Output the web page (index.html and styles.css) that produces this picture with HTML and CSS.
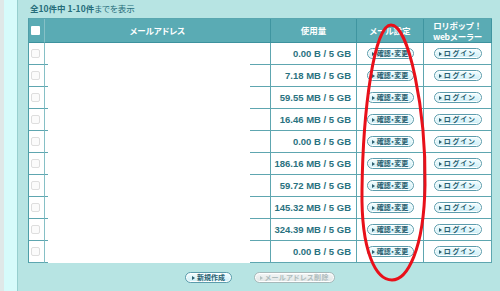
FILE: index.html
```html
<!DOCTYPE html>
<html lang="ja">
<head>
<meta charset="utf-8">
<title>メールアドレス一覧</title>
<link rel="stylesheet" href="styles.css">
</head>
<body>
<div class="page">
  <aside class="side"></aside>
  <main class="main">
    <p class="count"><b>全10件中 1-10件</b>までを表示</p>
    <div class="grid">
      <div class="hd ck"><span class="box head-box"></span></div>
      <div class="hd">メールアドレス</div>
      <div class="hd">使用量</div>
      <div class="hd">メール設定</div>
      <div class="hd two"><span class="ln">ロリポップ！</span><span class="ln">webメーラー</span></div>

      <div class="cell ck"><span class="box"></span></div><div class="cell mail"></div><div class="cell use">0.00 B / 5 GB</div><div class="cell btnc"><span class="btn">確認・変更</span></div><div class="cell btnc"><span class="btn login">ログイン</span></div>
      <div class="cell ck"><span class="box"></span></div><div class="cell mail"></div><div class="cell use">7.18 MB / 5 GB</div><div class="cell btnc"><span class="btn">確認・変更</span></div><div class="cell btnc"><span class="btn login">ログイン</span></div>
      <div class="cell ck"><span class="box"></span></div><div class="cell mail"></div><div class="cell use">59.55 MB / 5 GB</div><div class="cell btnc"><span class="btn">確認・変更</span></div><div class="cell btnc"><span class="btn login">ログイン</span></div>
      <div class="cell ck"><span class="box"></span></div><div class="cell mail"></div><div class="cell use">16.46 MB / 5 GB</div><div class="cell btnc"><span class="btn">確認・変更</span></div><div class="cell btnc"><span class="btn login">ログイン</span></div>
      <div class="cell ck"><span class="box"></span></div><div class="cell mail"></div><div class="cell use">0.00 B / 5 GB</div><div class="cell btnc"><span class="btn">確認・変更</span></div><div class="cell btnc"><span class="btn login">ログイン</span></div>
      <div class="cell ck"><span class="box"></span></div><div class="cell mail"></div><div class="cell use">186.16 MB / 5 GB</div><div class="cell btnc"><span class="btn">確認・変更</span></div><div class="cell btnc"><span class="btn login">ログイン</span></div>
      <div class="cell ck"><span class="box"></span></div><div class="cell mail"></div><div class="cell use">59.72 MB / 5 GB</div><div class="cell btnc"><span class="btn">確認・変更</span></div><div class="cell btnc"><span class="btn login">ログイン</span></div>
      <div class="cell ck"><span class="box"></span></div><div class="cell mail"></div><div class="cell use">145.32 MB / 5 GB</div><div class="cell btnc"><span class="btn">確認・変更</span></div><div class="cell btnc"><span class="btn login">ログイン</span></div>
      <div class="cell ck"><span class="box"></span></div><div class="cell mail"></div><div class="cell use">324.39 MB / 5 GB</div><div class="cell btnc"><span class="btn">確認・変更</span></div><div class="cell btnc"><span class="btn login">ログイン</span></div>
      <div class="cell ck"><span class="box"></span></div><div class="cell mail"></div><div class="cell use">0.00 B / 5 GB</div><div class="cell btnc"><span class="btn">確認・変更</span></div><div class="cell btnc"><span class="btn login">ログイン</span></div>

      <div class="mask"></div>
    </div>
    <div class="actions">
      <span class="btn new">新規作成</span>
      <span class="btn off">メールアドレス削除</span>
    </div>
  </main>
  <svg class="mark" width="500" height="291" viewBox="0 0 500 291" aria-hidden="true">
    <path d="M391,25 C409,25 426,110 425,185 C424,250 407,280 392,280 C376,280 361,252 362,190 C363,110 374,25 391,25 Z" fill="none" stroke="#e8101a" stroke-width="3"/>
  </svg>
</div>
</body>
</html>
```

FILE: styles.css
```css
* { box-sizing: border-box; }

html, body {
  margin: 0;
  padding: 0;
}

body {
  width: 500px;
  height: 291px;
  overflow: hidden;
  background: #b7e4e3;
  font-family: "Noto Sans CJK JP", "Liberation Sans", sans-serif;
  font-feature-settings: "palt";
  color: #226b78;
}

.page {
  position: relative;
  display: flex;
  width: 500px;
  height: 291px;
}

.side {
  flex: 0 0 18px;
  height: 100%;
  background: #d6fbfb;
  border-left: 4px solid #dfe8e8;
  border-right: 1px solid #96cfcf;
}

.main {
  flex: 1;
  padding-left: 10px;
}

.count {
  margin: 0;
  height: 18px;
  padding: 3px 0 0 2px;
  font-size: 8.5px;
  line-height: 11px;
  color: #266d7a;
  white-space: nowrap;
}

.count b { font-weight: 700; }

.grid {
  position: relative;
  display: grid;
  grid-template-columns: 16px 226px 86px 67px 68px;
  grid-template-rows: 24px repeat(10, 22px);
  width: 464px;
  border-left: 1px solid #4f9ea8;
  border-top: 1px solid #5aa7b0;
  background: #fff;
}

.hd, .cell {
  border-right: 1px solid #5ea6b0;
  border-bottom: 1px solid #5ea6b0;
  display: flex;
  align-items: center;
}

.hd {
  background: #5aabb4;
  border-right-color: #3f95a0;
  border-bottom-color: #3d929e;
  justify-content: center;
  color: #fff;
  font-weight: 700;
  font-size: 8.5px;
  line-height: 11px;
  text-align: center;
  white-space: nowrap;
}

.hd.two {
  flex-direction: column;
  justify-content: center;
  font-feature-settings: normal;
  letter-spacing: -0.4px;
}

.ln { display: block; height: 11px; }

.ck {
  justify-content: flex-end;
  padding-right: 4px;
  border-right-color: #86c0c6;
}

.box {
  display: block;
  width: 9px;
  height: 9px;
  border: 1px solid #dedede;
  border-radius: 2px;
  background: #fbfbfb;
}

.head-box {
  border: none;
  background: #fff;
  width: 9px;
  height: 9px;
  border-radius: 1px;
}

.cell { background: #fff; }

.use {
  justify-content: flex-end;
  padding-right: 5px;
  font-family: "Liberation Sans", sans-serif;
  font-weight: 700;
  font-size: 9.5px;
  color: #2a7280;
  white-space: nowrap;
}

.btnc { justify-content: center; }

.btn {
  display: inline-flex;
  align-items: center;
  justify-content: center;
  gap: 2px;
  height: 11px;
  width: 47px;
  border: 1px solid #5b9cac;
  border-radius: 6px;
  background: linear-gradient(#f2fdff, #cdeef6);
  box-shadow: inset 0 0 0 1px #ffffff;
  font-size: 7px;
  font-weight: 700;
  line-height: 9px;
  color: #2b5f70;
  white-space: nowrap;
}

.btn::before {
  content: "";
  display: block;
  width: 0;
  height: 0;
  border-left: 3px solid #2b5f70;
  border-top: 2px solid transparent;
  border-bottom: 2px solid transparent;
}

.btn.login { width: 48px; letter-spacing: 1.5px; }

.mask {
  position: absolute;
  left: 19px;
  top: 24px;
  width: 202px;
  height: 220px;
  background: #fff;
}

.actions {
  width: 464px;
  margin-top: 9px;
  display: flex;
  justify-content: center;
  gap: 22px;
}

.btn.new { width: 47px; }

.btn.off {
  width: 81px;
  border-color: #a7b9ba;
  background: linear-gradient(#f4f6f6, #dfe5e5);
  color: #aebcbd;
  letter-spacing: 0.5px;
}

.btn.off::before { border-left-color: #b3c1c2; }

.mark {
  position: absolute;
  left: 0;
  top: 0;
  pointer-events: none;
}
```
